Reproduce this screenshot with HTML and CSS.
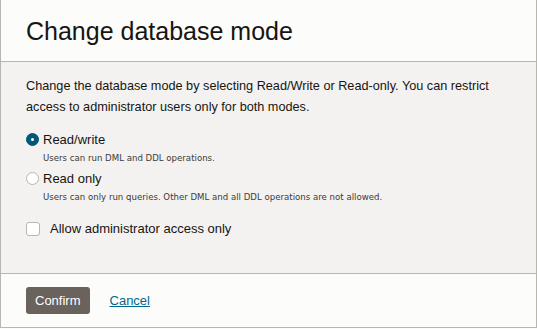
FILE: index.html
```html
<!DOCTYPE html>
<html>
<head>
    <meta name="viewport" content="width=device-width, initial-scale=1.0">
    <link rel="stylesheet" href="styles.css">
</head>
<body>
    <div class="dialogo">
        <div class="cabecalho">
            <h1>Change database mode</h1>
        </div>
        <div class="corpo">
            <p class="descricao">Change the database mode by selecting Read/Write or Read-only. You can restrict access to administrator users only for both modes.</p>

            <div class="opcao">
                <span class="radio marcado"></span>
                <span class="rotulo">Read/write</span>
            </div>
            <div class="ajuda">Users can run DML and DDL operations.</div>

            <div class="opcao">
                <span class="radio"></span>
                <span class="rotulo">Read only</span>
            </div>
            <div class="ajuda">Users can only run queries. Other DML and all DDL operations are not allowed.</div>

            <div class="caixa-linha">
                <span class="caixa"></span>
                <span class="rotulo">Allow administrator access only</span>
            </div>
        </div>
        <div class="rodape">
            <button class="confirmar">Confirm</button>
            <a class="cancelar" href="#">Cancel</a>
        </div>
    </div>
</body>
</html>
```

FILE: styles.css
```css
        body {
            margin: 0;
            font-family: "Liberation Sans", Arial, sans-serif;
            background-color: #fcfcfa;
            color: #161513;
        }

        .dialogo {
            width: 537px;
            height: 328px;
            box-sizing: border-box;
            border: 1px solid #b9b5b0;
            border-top: none;
            display: flex;
            flex-direction: column;
            background-color: #fcfcfa;
        }

        .cabecalho {
            height: 62px;
            box-sizing: border-box;
            border-bottom: 1px solid #b9b5b0;
            padding: 17px 25px 0;
        }

        h1 {
            margin: 0;
            font-size: 25px;
            font-weight: normal;
            line-height: 28px;
        }

        .corpo {
            flex: 1;
            background-color: #f3f2f0;
            border-bottom: 1px solid #b9b5b0;
            padding: 14px 25px 0;
        }

        .descricao {
            margin: 0 0 12px;
            font-size: 12.7px;
            line-height: 21px;
        }

        .opcao {
            display: flex;
            align-items: center;
            gap: 4px;
            height: 19px;
        }

        .radio {
            width: 11px;
            height: 11px;
            border: 1px solid #b9b5b0;
            border-radius: 50%;
            background-color: #fff;
            display: flex;
            align-items: center;
            justify-content: center;
        }

        .marcado {
            background-color: #005a77;
            border-color: #005a77;
        }

        .marcado::after {
            content: "";
            width: 3px;
            height: 3px;
            border-radius: 50%;
            background-color: #fff;
        }

        .rotulo {
            font-size: 13px;
        }

        .ajuda {
            font-family: "DejaVu Sans", sans-serif;
            font-size: 8.6px;
            color: #3d3935;
            padding-left: 17px;
            height: 20px;
            line-height: 18px;
        }

        .caixa-linha {
            display: flex;
            align-items: center;
            gap: 10px;
            margin-top: 13px;
        }

        .caixa {
            width: 12px;
            height: 12px;
            border: 1px solid #b9b5b0;
            border-radius: 3px;
            background-color: #fff;
        }

        .rodape {
            height: 53px;
            display: flex;
            align-items: center;
            gap: 20px;
            padding: 0 25px;
        }

        .confirmar {
            padding: 0 9px;
            height: 27px;
            background-color: #69625d;
            color: white;
            border: none;
            border-radius: 3px;
            font-family: "Liberation Sans", Arial, sans-serif;
            font-size: 13px;
        }

        .cancelar {
            color: #00688c;
            font-size: 13px;
        }
```
